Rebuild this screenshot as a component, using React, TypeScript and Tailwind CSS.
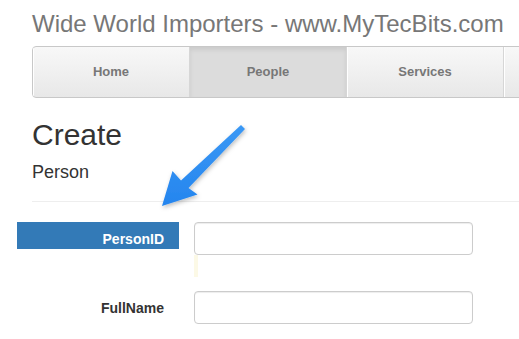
import React from "react";

const tabs = ["Home", "People", "Services", ""];

export default function App() {
  return (
    <div className="relative w-[519px] h-[339px] overflow-hidden bg-white" style={{ fontFamily: '"Liberation Sans", Arial, sans-serif' }}>
      <div className="pl-[32px]">
        <h1 className="mt-[9px] h-[30px] text-[24px] leading-[30px] text-[#777] whitespace-nowrap font-normal">
          Wide World Importers - www.MyTecBits.com
        </h1>
        <nav className="mt-[7px] flex w-[700px] h-[52px] rounded-[4px] border border-[#c8c8c8] overflow-hidden bg-gradient-to-b from-[#f8f8f8] to-[#e8e8e8]">
          {tabs.map((t, i) => (
            <div
              key={i}
              className={
                "w-[157px] shrink-0 flex items-center justify-center text-[13px] font-bold text-[#777] border-r border-r-[#d6d6d6] " +
                (t === "People"
                  ? "bg-[#dcdcdc] shadow-[inset_0_3px_4px_rgba(0,0,0,0.08)]"
                  : "shadow-[inset_1px_0_0_#ffffff]")
              }
            >
              {t}
            </div>
          ))}
        </nav>
        <h2 className="mt-[19px] text-[30px] leading-[36px] text-[#333] font-normal">Create</h2>
        <h4 className="mt-[8px] text-[18px] leading-[22px] text-[#333] font-normal">Person</h4>
        <hr className="mt-[18px] border-t border-[#eee] w-[600px]" />
        <div className="ml-[-15px] mt-[20px] flex flex-col">
          <div className="flex">
            <div className="w-[162px] h-[27px] bg-[#337ab7] pt-[7px] pr-[15px] text-right text-[14px] leading-[20px] font-bold text-white">
              PersonID
            </div>
            <div className="ml-[15px] flex flex-col">
              <div className="w-[279px] h-[33px] rounded-[4px] border border-[#ccc] shadow-[inset_0_1px_1px_rgba(0,0,0,0.075)]" />
              <div className="w-[4px] h-[22px] bg-[#fcf9e6]" />
            </div>
          </div>
          <div className="flex mt-[14px]">
            <div className="w-[162px] h-[27px] pt-[7px] pr-[15px] text-right text-[14px] leading-[20px] font-bold text-[#333]">
              FullName
            </div>
            <div className="ml-[15px]">
              <div className="w-[279px] h-[33px] rounded-[4px] border border-[#ccc] shadow-[inset_0_1px_1px_rgba(0,0,0,0.075)]" />
            </div>
          </div>
        </div>
      </div>
      <svg className="absolute left-0 top-0 pointer-events-none" width="519" height="339">
        <defs>
          <filter id="sh" x="-20%" y="-20%" width="140%" height="140%">
            <feDropShadow dx="1" dy="2" stdDeviation="2" floodColor="#000" floodOpacity="0.25" />
          </filter>
          <linearGradient id="ag" x1="0" y1="0" x2="0" y2="1">
            <stop offset="0" stopColor="#3a98f5" />
            <stop offset="1" stopColor="#2585ee" />
          </linearGradient>
        </defs>
        <polygon
          filter="url(#sh)"
          fill="url(#ag)"
          points="241,125 181,180.5 172.5,171 162,206 197.5,194.5 188.5,188 245,129"
          strokeLinejoin="round"
        />
      </svg>
    </div>
  );
}
